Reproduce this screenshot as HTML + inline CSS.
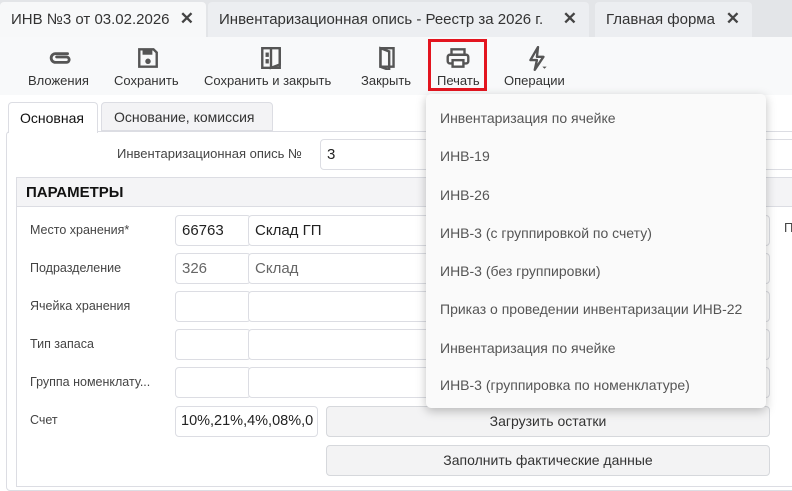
<!DOCTYPE html>
<html><head><meta charset="utf-8"><style>
*{box-sizing:border-box;margin:0;padding:0}
body{width:792px;height:481px;overflow:hidden;background:#fff;font-family:"Liberation Sans","Noto Sans CJK SC",sans-serif;color:#333;position:relative}
.a{position:absolute}
.tabbar{left:0;top:0;width:792px;height:37px;background:#e3e5e8}
.tab{top:2px;height:35px;background:#eceef1;border-radius:4px 4px 0 0;font-size:15px;color:#333;padding:9px 0 0 11px;white-space:nowrap}
.tab b{position:absolute;right:12px;top:7px;font-size:17px;font-weight:bold;color:#444}
.tb{left:0;top:37px;width:792px;height:58px;background:#f8f9fa}
.lbl{font-size:13px;color:#333;top:73px;white-space:nowrap}
.ic{top:46px}
.flbl{font-size:12.5px;color:#444;left:30px;white-space:nowrap}
.in{height:31px;border:1px solid #dcdde3;border-radius:4px;background:#fff;font-size:15px;padding:6px 6px;color:#222}
.btn{height:31px;border:1px solid #d6d8dc;border-radius:4px;background:#f3f3f4;font-size:14px;text-align:center;padding-top:6px;color:#333}
.dd{left:426px;top:94px;width:340px;height:314px;background:#fafafa;border-radius:5px;box-shadow:0 3px 10px rgba(0,0,0,.25)}
.dd div{position:absolute;left:14px;font-size:14px;color:#555;white-space:nowrap}
</style></head><body>
<div class="a tabbar"></div>
<div class="a tab" style="left:0;width:206px;background:#f7f8f9">ИНВ №3 от 03.02.2026<b>✕</b></div>
<div class="a tab" style="left:208px;width:381px">Инвентаризационная опись - Реестр за 2026 г.<b>✕</b></div>
<div class="a tab" style="left:595px;width:157px">Главная форма<b>✕</b></div>
<div class="a tb"></div>
<svg class="a ic" style="left:49px" width="24" height="24" viewBox="0 0 22 22"><path d="M17 7H6a4 4 0 0 0 0 8h10a2.5 2.5 0 0 0 0-5H7" fill="none" stroke="#555" stroke-width="2.6" stroke-linecap="round"/></svg>
<svg class="a ic" style="left:136px" width="24" height="24" viewBox="0 0 22 22"><path d="M3 3h13l3 3v13H3z" fill="none" stroke="#555" stroke-width="2.2"/><rect x="6" y="4" width="9" height="4" fill="#555"/><circle cx="11" cy="14" r="2.5" fill="#555"/></svg>
<svg class="a ic" style="left:259px" width="24" height="24" viewBox="0 0 22 22"><path d="M3 2h16v18H3z" fill="none" stroke="#555" stroke-width="2.2"/><path d="M11 2v18l8-3V2" fill="none" stroke="#555" stroke-width="2.2"/><rect x="6" y="6" width="3" height="4" fill="#555"/><rect x="6" y="12" width="3" height="4" fill="#555"/></svg>
<svg class="a ic" style="left:375px" width="24" height="24" viewBox="0 0 22 22"><path d="M5 2h12v17H5z" fill="none" stroke="#555" stroke-width="2.2"/><path d="M5 2l8 3v17l-8-3z" fill="none" stroke="#555" stroke-width="2.2"/></svg>
<svg class="a ic" style="left:445px" width="26" height="24" viewBox="0 0 24 22"><path d="M6 8V3h12v5" fill="none" stroke="#555" stroke-width="2.2"/><rect x="2.5" y="8" width="19" height="8" rx="2" fill="none" stroke="#555" stroke-width="2.2"/><rect x="7" y="13" width="10" height="6" fill="#fff" stroke="#555" stroke-width="2.2"/></svg>
<svg class="a ic" style="left:526px" width="24" height="26" viewBox="0 0 22 24"><path d="M11 1L4 13h6l-2 9 8-12h-6z" fill="none" stroke="#555" stroke-width="2.2" stroke-linejoin="round"/><path d="M15 19h4l-2 2z" fill="#555"/></svg>
<div class="a lbl" style="left:28px">Вложения</div>
<div class="a lbl" style="left:114px">Сохранить</div>
<div class="a lbl" style="left:204px">Сохранить и закрыть</div>
<div class="a lbl" style="left:361px">Закрыть</div>
<div class="a lbl" style="left:437px">Печать</div>
<div class="a lbl" style="left:504px">Операции</div>
<div class="a" style="left:428px;top:39px;width:59px;height:52px;border:3px solid #e3151f"></div>
<div class="a" style="left:6px;top:131px;width:800px;height:360px;border:1px solid #dcdde3;border-radius:4px"></div>
<div class="a" style="left:8px;top:102px;width:90px;height:31px;background:#fff;border:1px solid #dcdde3;border-bottom:none;border-radius:4px 4px 0 0;font-size:14px;color:#111;padding:7px 0 0 11px">Основная</div>
<div class="a" style="left:101px;top:102px;width:172px;height:29px;background:#f3f3f5;border:1px solid #dcdde3;border-radius:4px 4px 0 0;font-size:14px;color:#333;padding:6px 0 0 12px">Основание, комиссия</div>
<div class="a" style="left:117px;top:146px;font-size:13px;color:#444">Инвентаризационная опись №</div>
<div class="a in" style="left:320px;top:139px;width:480px;height:31px">3</div>
<div class="a" style="left:16px;top:177px;width:800px;height:310px;border:1px solid #dcdde3"></div>
<div class="a" style="left:17px;top:178px;width:800px;height:29px;background:#f4f4f6;border-bottom:1px solid #dcdde3;font-weight:bold;font-size:15px;color:#111;padding:6px 0 0 9px">ПАРАМЕТРЫ</div>
<div class="a flbl" style="top:223px">Место хранения*</div>
<div class="a in" style="left:175px;top:215px;width:76px">66763</div>
<div class="a in" style="left:248px;top:215px;width:522px">Склад ГП</div>
<div class="a flbl" style="top:261px">Подразделение</div>
<div class="a in" style="left:175px;top:253px;width:76px;color:#666">326</div>
<div class="a in" style="left:248px;top:253px;width:522px;color:#666">Склад</div>
<div class="a flbl" style="top:299px">Ячейка хранения</div>
<div class="a in" style="left:175px;top:291px;width:76px"></div>
<div class="a in" style="left:248px;top:291px;width:522px"></div>
<div class="a flbl" style="top:337px">Тип запаса</div>
<div class="a in" style="left:175px;top:329px;width:76px"></div>
<div class="a in" style="left:248px;top:329px;width:522px"></div>
<div class="a flbl" style="top:375px">Группа номенклату...</div>
<div class="a in" style="left:175px;top:367px;width:76px"></div>
<div class="a in" style="left:248px;top:367px;width:522px"></div>
<div class="a flbl" style="top:413px">Счет</div>
<div class="a in" style="left:175px;top:406px;width:143px;font-size:14.5px;padding-left:5px;overflow:hidden;white-space:nowrap">10%,21%,4%,08%,0</div>
<div class="a btn" style="left:326px;top:406px;width:444px">Загрузить остатки</div>
<div class="a btn" style="left:326px;top:445px;width:444px">Заполнить фактические данные</div>
<div class="a" style="left:784px;top:220px;font-size:13px;color:#444">П</div>
<div class="a dd">
<div style="top:16px">Инвентаризация по ячейке</div>
<div style="top:54px">ИНВ-19</div>
<div style="top:93px">ИНВ-26</div>
<div style="top:131px">ИНВ-3 (с группировкой по счету)</div>
<div style="top:169px">ИНВ-3 (без группировки)</div>
<div style="top:207px">Приказ о проведении инвентаризации ИНВ-22</div>
<div style="top:246px">Инвентаризация по ячейке</div>
<div style="top:283px">ИНВ-3 (группировка по номенклатуре)</div>
</div>
</body></html>
